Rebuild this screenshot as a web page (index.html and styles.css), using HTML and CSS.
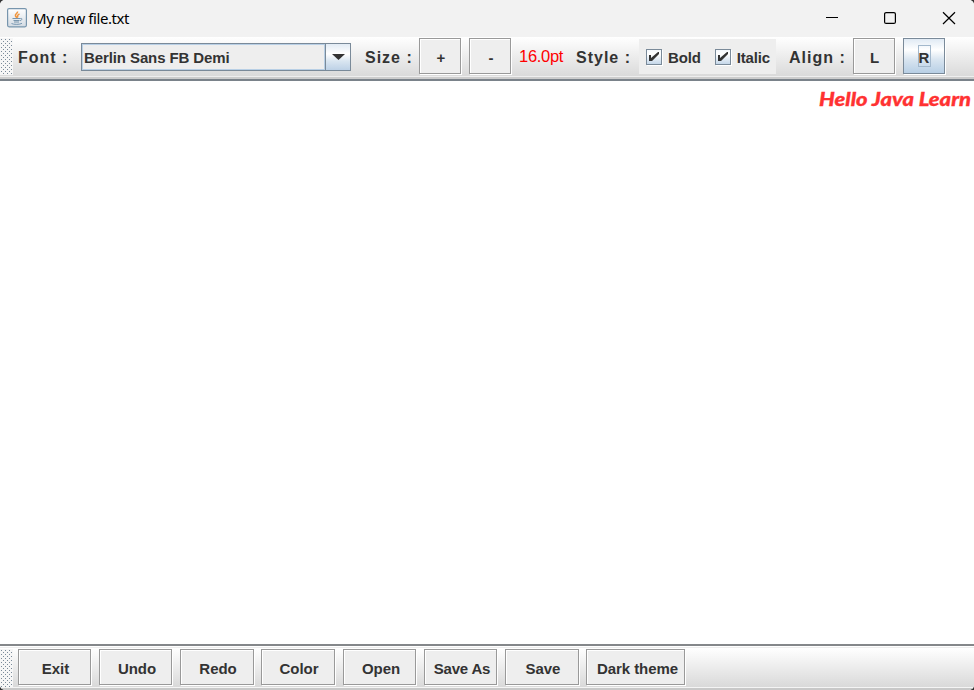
FILE: index.html
```html
<!DOCTYPE html>
<html lang="en">
<head>
<meta charset="utf-8">
<title>My new file.txt</title>
<link rel="stylesheet" href="styles.css">
</head>
<body>
<div class="window">
  <header class="titlebar">
    <svg class="app-icon" width="20" height="20" viewBox="0 0 20 20">
      <defs><linearGradient id="tile" x1="0" y1="0" x2="0" y2="1"><stop offset="0" stop-color="#fff"/><stop offset="1" stop-color="#d3dbe3"/></linearGradient></defs>
      <rect x=".6" y=".6" width="18.8" height="18.2" rx="1.5" fill="url(#tile)" stroke="#7795ad" stroke-width="1.2"/>
      <path d="M10.5 3.5C11 5.500 7.500 6 8.500 8L10 10M12.500 6C10.500 7 10 8 11 9.500" fill="none" stroke="#f0963f" stroke-width="1.500"/>
      <path d="M5.500 10.500h8M6.500 12.500h6M7 14h5" fill="none" stroke="#7896ae" stroke-width="1.200"/>
      <path d="M13.500 10.500c2-.5 2 1.500-.5 2.300M4.500 15.500c2 1.200 8.500 1.200 10.500-.2" fill="none" stroke="#7898b2"/>
    </svg>
    <span class="title">My new file.txt</span>
    <svg class="controls" width="132" height="14" viewBox="0 0 132 14" fill="none" stroke="#000" stroke-width="1.2">
      <path d="M2 6.500h12" stroke-width="1"/>
      <rect x="60.600" y="1.600" width="10.800" height="10.800" rx="1.500"/>
      <path d="M119 1.200l12 11.800M131 1.200l-12 11.800"/>
    </svg>
  </header>

  <div class="toolbar top">
    <svg class="grip" width="13" height="37"><defs><pattern id="dots" width="4" height="4" patternUnits="userSpaceOnUse"><path d="M1 1h1v1H1zM3 3h1v1H3z" fill="#7a8a99"/></pattern></defs><rect width="13" height="37" fill="url(#dots)"/></svg>
    <span class="label font-label">Font :</span>
    <div class="combo"><span class="combo-text">Berlin Sans FB Demi</span><span class="combo-arrow"><svg width="13" height="6" viewBox="0 0 13 6"><path d="M0 0h13L6.500 6z" fill="#333"/></svg></span></div>
    <span class="label size-label">Size :</span>
    <button class="btn small">+</button>
    <button class="btn small">-</button>
    <span class="points">16.0pt</span>
    <span class="label style-label">Style :</span>
    <div class="checks">
      <label class="check"><span class="box"><svg width="10" height="10" viewBox="0 0 10 10"><path d="M0 3h2v3l7-6h1v2L3 9H0z" fill="#333"/></svg></span><span>Bold</span></label>
      <label class="check"><span class="box"><svg width="10" height="10" viewBox="0 0 10 10"><path d="M0 3h2v3l7-6h1v2L3 9H0z" fill="#333"/></svg></span><span>Italic</span></label>
    </div>
    <span class="label align-label">Align :</span>
    <button class="btn small letter">L</button>
    <button class="btn small active"><span class="focus">R</span></button>
  </div>

  <main class="editor">
    <svg class="document" width="156" height="24"><text x="1" y="17" textLength="152" lengthAdjust="spacingAndGlyphs">Hello Java Learn</text></svg>
  </main>

  <div class="toolbar bottom">
    <svg class="grip" width="13" height="38"><rect width="13" height="38" fill="url(#dots)"/></svg>
    <button class="btn exit">Exit</button>
    <button class="btn undo">Undo</button>
    <button class="btn redo">Redo</button>
    <button class="btn color">Color</button>
    <button class="btn open">Open</button>
    <button class="btn saveas">Save As</button>
    <button class="btn save">Save</button>
    <button class="btn theme">Dark theme</button>
  </div>
</div>
</body>
</html>
```
FILE: styles.css
```css
* { box-sizing: border-box; }
body { margin: 0; background: #333; font-family: "Liberation Sans", Arial, sans-serif; color: #333; }
.window { width: 974px; height: 690px; display: flex; flex-direction: column; overflow: hidden; border-radius: 5px; background: #fff; }
.titlebar { height: 37px; flex: none; display: flex; align-items: center; padding: 0 18px 1px 7px; background: #f2f2f2; }
.app-icon { margin-top: -1px; }
.title { margin-left: 6px; font: 15px/20px "Noto Sans", sans-serif; letter-spacing: -.43px; color: #000; }
.controls { margin-left: auto; }
.toolbar { display: flex; flex: none; white-space: nowrap; }
.top { height: 44px; align-items: flex-start; background: linear-gradient(#fff, #dadada 39px, #eee 39px, #eee 40px, #ccc 40px, #ccc 42px, #7a828a 42px); }
.bottom { height: 46px; padding-top: 5px; background: linear-gradient(#84878a 2px, #fff 2px, #fff 3px, #eee 3px, #eee 4px, #fff 4px, #d9d9d9 43px, #f4f4f4 43px, #f4f4f4 44px, #c8c8c8 44px); }
.grip { flex: none; background: #f6f6f6; }
.top .grip { margin-top: 1px; }
.label { font-size: 16px; font-weight: bold; line-height: 20px; margin-top: 11px; letter-spacing: 1px; flex: none; }
.font-label { width: 63px; margin-left: 5px; }
.size-label { width: 54px; margin-left: 14px; }
.style-label { width: 63px; }
.align-label { width: 64px; margin-left: 13px; }
.combo { width: 270px; height: 28px; margin-top: 6px; flex: none; display: flex; border: 1px solid #7a8a99; background: #eee; }
.combo-text { flex: 1; padding-left: 1px; border: 1px solid #b8cfe5; font: bold 15px/26px "Liberation Sans", sans-serif; letter-spacing: -.1px; }
.combo-arrow { width: 25px; display: flex; align-items: center; justify-content: center; border-left: 1px solid #7a8a99; background: linear-gradient(#e2ebf4, #fff 38%, #dae6f1 65%, #bdd1e6); }
.btn { flex: none; height: 36px; padding: 3px 0 0 2px; border: 1px solid #999; border-radius: 0; background: #eee; box-shadow: inset 1px 1px #fff, 1px 1px #fff; color: #333; font: bold 15px/20px "Liberation Sans", sans-serif; }
.small { width: 42px; margin: 1px 8px 0 0; padding-top: 3px; }
.letter { padding-left: 1px; }
.active { border-color: #7a8a99; background: linear-gradient(#e0eaf4, #fff 32%, #d9e5f0 60%, #b8cfe5); box-shadow: 1px 1px #fff; margin-right: 0; padding: 0; }
.focus { display: block; width: 13px; height: 22px; margin: 0 auto; line-height: 23px; border: 1px solid #a3b8cc; }
.points { width: 57px; margin-top: 9px; font-size: 16.500px; line-height: 20px; color: #f00; letter-spacing: -.3px; }
.checks { width: 137px; height: 35px; margin-top: 2px; flex: none; display: flex; gap: 14px; padding-left: 7px; background: #eee; font: bold 15px/37px "Liberation Sans", sans-serif; }
.check { display: flex; letter-spacing: -.15px; }
.box { width: 16px; height: 16px; margin: 10px 6px 0 0; border: 1px solid #7a8a99; background: linear-gradient(#f4f8fc, #fff 30%, #c5d7e9); box-shadow: 1px 1px #fff; display: flex; align-items: center; justify-content: center; }
.editor { flex: 1; display: flex; justify-content: flex-end; padding-top: 8px; background: #fff; }
.document { font: italic 900 18px Lato, sans-serif; fill: #ff3232; stroke: #ff3232; stroke-width: .3px; }
.bottom .btn { margin-right: 8px; padding-left: 3px; letter-spacing: -.05px; }
.bottom .exit { width: 73px; margin-left: 5px; padding-left: 2px; }
.bottom .undo { width: 73px; }
.bottom .redo { width: 74px; margin-right: 7px; padding-left: 2px; }
.bottom .color { width: 74px; padding-left: 2px; }
.bottom .open { width: 73px; }
.bottom .saveas { width: 73px; letter-spacing: -.2px; }
.bottom .save { width: 74px; margin-right: 7px; padding-left: 2px; }
.bottom .theme { width: 99px; margin-right: 0; padding-left: 4px; }
```
